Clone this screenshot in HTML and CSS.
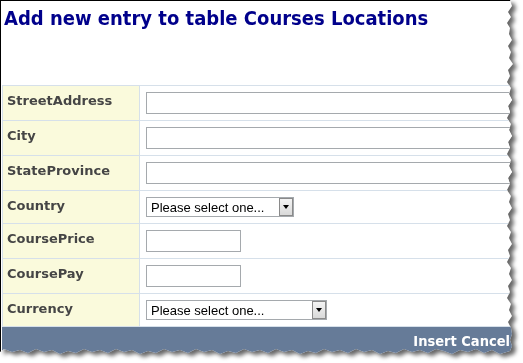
FILE: index.html
```html
<!DOCTYPE html>
<html>
<head>
<link rel="stylesheet" href="styles.css">
</head>
<body>
<div class="sheet">
<div class="page">
<h1 class="title">Add new entry to table Courses Locations</h1>

<table class="entry">
<tr>
<th>StreetAddress</th>
<td><input class="text wide" type="text"></td>
</tr>
<tr>
<th>City</th>
<td><input class="text wide" type="text"></td>
</tr>
<tr>
<th>StateProvince</th>
<td><input class="text wide" type="text"></td>
</tr>
<tr>
<th>Country</th>
<td>
<div class="select">
<select><option>Please select one...</option></select>
<span class="arrow"></span>
</div>
</td>
</tr>
<tr>
<th>CoursePrice</th>
<td><input class="text short" type="text"></td>
</tr>
<tr>
<th>CoursePay</th>
<td><input class="text short" type="text"></td>
</tr>
<tr>
<th>Currency</th>
<td>
<div class="select long">
<select><option>Please select one...</option></select>
<span class="arrow"></span>
</div>
</td>
</tr>
<tr class="actions">
<td colspan="2"><a href="#">Insert</a> <a href="#">Cancel</a></td>
</tr>
</table>
</div>
</div>
</body>
</html>
```

FILE: styles.css
```css
/* screenshot of an ASP.NET style insert form, torn edge on the right and bottom */
body {
    margin: 0;
    background: #fff;
}
.sheet {
    width: 523px;
    height: 363px;
    filter: drop-shadow(4px 3px 2px rgba(0, 0, 0, 0.6));
}
.page {
    width: 522px;
    height: 362px;
    background: #fff;
    border-top: 1px solid #000;
    border-left: 1px solid #000;
    overflow: hidden;
    /* torn paper edge */
    clip-path: polygon(0 0, 510px 0, 512px 6px, 508px 12px, 511px 17px, 507px 23px, 510px 28px, 509px 34px, 512px 40px, 508px 46px, 511px 52px, 509px 58px, 513px 64px, 508px 70px, 510px 76px, 507px 82px, 511px 88px, 509px 94px, 512px 100px, 508px 106px, 510px 112px, 507px 118px, 511px 124px, 509px 130px, 512px 136px, 508px 142px, 510px 148px, 507px 154px, 511px 160px, 509px 166px, 512px 172px, 508px 178px, 510px 184px, 507px 190px, 511px 196px, 509px 202px, 512px 208px, 508px 214px, 510px 220px, 507px 226px, 511px 232px, 509px 238px, 512px 244px, 508px 250px, 510px 256px, 507px 262px, 511px 268px, 509px 274px, 512px 280px, 508px 286px, 510px 292px, 507px 298px, 511px 304px, 509px 310px, 512px 316px, 508px 322px, 511px 328px, 512px 334px, 510px 340px, 512px 346px, 510px 351px, 500px 354px, 492px 350px, 484px 353px, 476px 349px, 468px 352px, 460px 350px, 452px 354px, 444px 351px, 436px 349px, 428px 353px, 420px 350px, 412px 352px, 404px 349px, 396px 353px, 388px 351px, 380px 354px, 372px 350px, 364px 352px, 356px 349px, 348px 353px, 340px 350px, 332px 352px, 324px 349px, 316px 353px, 308px 351px, 300px 354px, 292px 350px, 284px 352px, 276px 349px, 268px 353px, 260px 350px, 252px 352px, 244px 349px, 236px 353px, 228px 351px, 220px 354px, 212px 350px, 204px 352px, 196px 349px, 188px 353px, 180px 350px, 172px 352px, 164px 349px, 156px 353px, 148px 351px, 140px 354px, 132px 350px, 124px 352px, 116px 349px, 108px 353px, 100px 350px, 92px 352px, 84px 349px, 76px 353px, 68px 351px, 60px 354px, 52px 350px, 44px 352px, 36px 349px, 28px 353px, 20px 350px, 12px 352px, 4px 349px, 0 352px);
}
.title {
    margin: 0 0 54px 0;
    padding: 5px 3px 0 3px;
    font-family: 'DejaVu Sans Condensed', Tahoma, sans-serif;
    font-weight: bold;
    font-size: 20px;
    line-height: 25px;
    color: #00008b;
    white-space: nowrap;
}
.entry {
    margin-left: 1px;
    width: 512px;
    table-layout: fixed;
    border-collapse: collapse;
}
.entry th, .entry td {
    border: 1px solid #d6e0ea;
    vertical-align: top;
    padding: 6px;
}
.entry th {
    width: 126px;
    padding-left: 4px;
    background: #fafadc;
    text-align: left;
    color: #454545;
    font-family: 'DejaVu Sans', Tahoma, sans-serif;
    font-weight: bold;
    font-size: 13px;
    line-height: 17px;
    padding-top: 6px;
}
input.text {
    display: block;
    box-sizing: border-box;
    height: 22px;
    margin: 0;
    border: 1px solid #a5a9ad;
    background: #fff;
}
input.wide {
    width: 380px;
}
input.short {
    width: 95px;
}
.select {
    display: flex;
    box-sizing: border-box;
    width: 148px;
    height: 20px;
    border: 1px solid #a5a9ad;
    background: #fff;
}
.select.long {
    width: 181px;
}
.select select {
    flex: 1;
    min-width: 0;
    appearance: none;
    border: none;
    outline: none;
    background: transparent;
    margin: 0;
    padding: 0 0 0 4px;
    font-family: 'Liberation Sans', Arial, sans-serif;
    font-size: 13px;
    color: #000;
}
.arrow {
    width: 14px;
    box-sizing: border-box;
    border: 1px solid #8a8a8a;
    background: linear-gradient(#f4f4f4, #d9d9d9);
    display: flex;
    align-items: center;
    justify-content: center;
}
.arrow::after {
    content: "";
    border-top: 4px solid #000;
    border-left: 3px solid transparent;
    border-right: 3px solid transparent;
}
.actions td {
    background: #667b98;
    border-color: #667b98;
    text-align: right;
    padding: 6px 3px 7px 0;
    font-family: 'DejaVu Sans Condensed', Tahoma, sans-serif;
    font-weight: bold;
    font-size: 14.5px;
    line-height: 17px;
}
.actions a {
    color: #fff;
    text-decoration: none;
}
```
